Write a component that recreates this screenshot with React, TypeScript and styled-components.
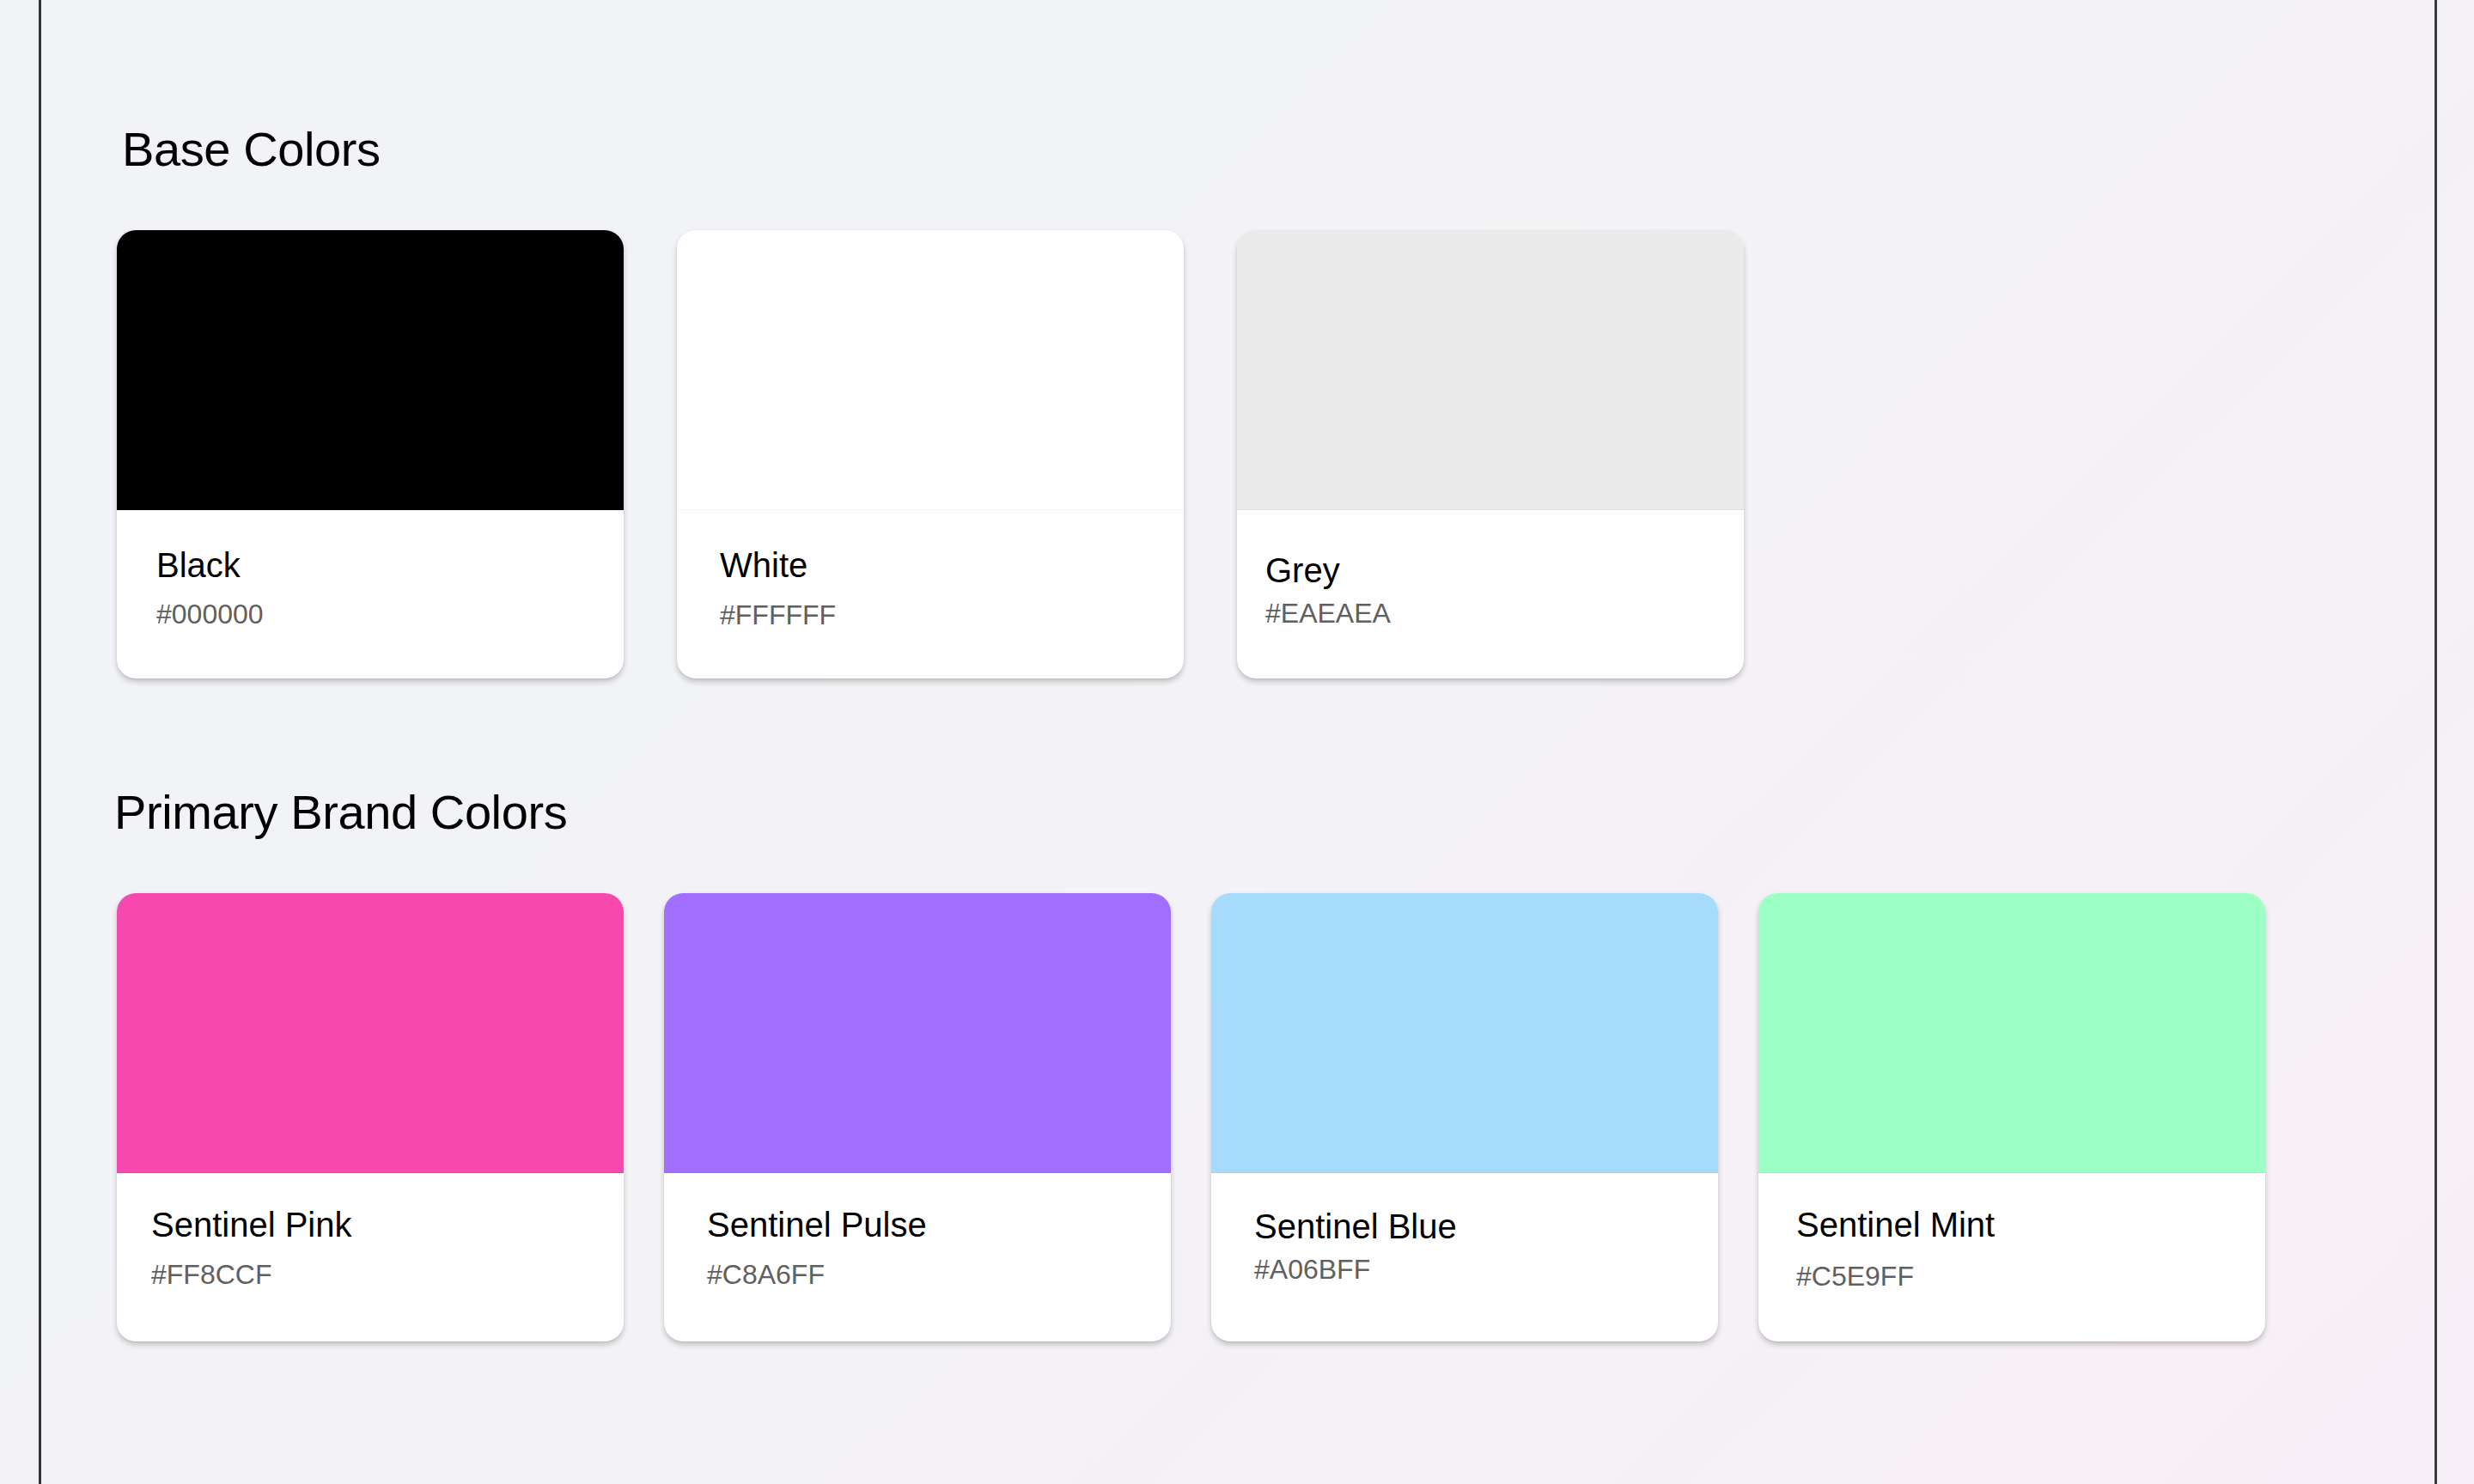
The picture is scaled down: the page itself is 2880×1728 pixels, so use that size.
import styled, { createGlobalStyle } from "styled-components";

const GlobalStyle = createGlobalStyle`
  html, body {
    margin: 0;
    padding: 0;
    overflow: hidden;
  }
  body {
    font-family: "Liberation Sans", Arial, sans-serif;
    background: linear-gradient(135deg, #f2f3f7 0%, #f3f3f6 45%, #f7eff7 100%);
    min-height: 100vh;
  }
`;

type Swatch = {
  name: string;
  hex: string;
  color: string;
  // text placement inside the card footer (varies slightly per card in the design)
  pl: number;
  pt: number;
  gap: number;
};

const baseColors: Swatch[] = [
  { name: "Black", hex: "#000000", color: "#000000", pl: 46, pt: 45, gap: 21 },
  { name: "White", hex: "#FFFFFF", color: "#FFFFFF", pl: 50, pt: 45, gap: 22 },
  { name: "Grey", hex: "#EAEAEA", color: "#EAEAEA", pl: 33, pt: 51, gap: 14 },
];

const brandColors: Swatch[] = [
  { name: "Sentinel Pink", hex: "#FF8CCF", color: "#F549AD", pl: 40, pt: 41, gap: 22 },
  { name: "Sentinel Pulse", hex: "#C8A6FF", color: "#A16EFF", pl: 50, pt: 41, gap: 22 },
  { name: "Sentinel Blue", hex: "#A06BFF", color: "#A6DBFC", pl: 50, pt: 43, gap: 14 },
  { name: "Sentinel Mint", hex: "#C5E9FF", color: "#9CFFC4", pl: 44, pt: 41, gap: 24 },
];

const ColorCard = ({ swatch }: { swatch: Swatch }) => {
  return (
    <Card>
      <ColorBlock $color={swatch.color} />
      <Details $pl={swatch.pl} $pt={swatch.pt} $gap={swatch.gap}>
        <ColorName>{swatch.name}</ColorName>
        <ColorHex>{swatch.hex}</ColorHex>
      </Details>
    </Card>
  );
};

const App = () => {
  return (
    <>
      <GlobalStyle />
      <Frame>
        <Section>
          <SectionTitle $indent={6}>Base Colors</SectionTitle>
          <CardRow $gap={62}>
            {baseColors.map((s) => (
              <ColorCard key={s.name} swatch={s} />
            ))}
          </CardRow>
        </Section>
        <Section>
          <SectionTitle $indent={-3}>Primary Brand Colors</SectionTitle>
          <CardRow $gap={47}>
            {brandColors.map((s) => (
              <ColorCard key={s.name} swatch={s} />
            ))}
          </CardRow>
        </Section>
      </Frame>
    </>
  );
};

const Frame = styled.main`
  box-sizing: border-box;
  width: 2792px;
  min-height: 1728px;
  margin-left: 45px;
  padding: 146px 0 0 88px;
  border-left: 3px solid #333333;
  border-right: 3px solid #3a3a3a;
  display: flex;
  flex-direction: column;
  gap: 128px;
`;

const Section = styled.section`
  display: flex;
  flex-direction: column;
  gap: 66px;
`;

const SectionTitle = styled.h2<{ $indent: number }>`
  margin: 0 0 0 ${({ $indent }) => $indent}px;
  font-size: 56px;
  line-height: 1;
  font-weight: 400;
  letter-spacing: -0.4px;
  color: #000000;
`;

const CardRow = styled.div<{ $gap: number }>`
  display: flex;
  align-items: flex-start;
  gap: ${({ $gap }) => $gap}px;
`;

const Card = styled.div`
  width: 590px;
  height: 522px;
  border-radius: 22px;
  background: #ffffff;
  overflow: hidden;
  box-shadow: 0 4px 6px rgba(0, 0, 0, 0.2), 0 1px 2px rgba(0, 0, 0, 0.06);
  display: flex;
  flex-direction: column;
`;

const ColorBlock = styled.div<{ $color: string }>`
  height: 325px;
  background: ${({ $color }) => $color};
  border-bottom: 1px solid rgba(0, 0, 0, 0.04);
`;

const Details = styled.div<{ $pl: number; $pt: number; $gap: number }>`
  display: flex;
  flex-direction: column;
  gap: ${({ $gap }) => $gap}px;
  padding: ${({ $pt }) => $pt - 1}px 24px 0 ${({ $pl }) => $pl}px;
`;

const ColorName = styled.div`
  font-size: 40px;
  line-height: 1;
  color: #000000;
`;

const ColorHex = styled.div`
  font-size: 32px;
  line-height: 1;
  color: #606060;
`;

export default App;
